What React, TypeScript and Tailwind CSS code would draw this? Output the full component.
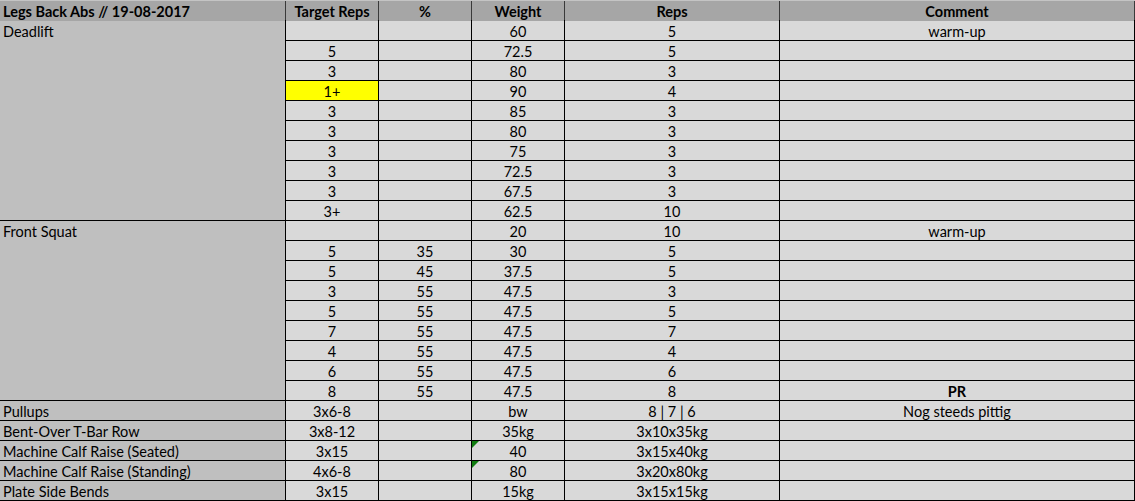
import React from 'react';

type Row = {
  target?: string;
  pct?: string;
  weight: string;
  reps: string;
  comment?: string;
  bold?: boolean;
  highlight?: boolean;
  flag?: boolean;
};

type Exercise = { name: string; rows: Row[] };

const EXERCISES: Exercise[] = [
  {
    name: 'Deadlift',
    rows: [
      { weight: '60', reps: '5', comment: 'warm-up' },
      { target: '5', weight: '72.5', reps: '5' },
      { target: '3', weight: '80', reps: '3' },
      { target: '1+', weight: '90', reps: '4', highlight: true },
      { target: '3', weight: '85', reps: '3' },
      { target: '3', weight: '80', reps: '3' },
      { target: '3', weight: '75', reps: '3' },
      { target: '3', weight: '72.5', reps: '3' },
      { target: '3', weight: '67.5', reps: '3' },
      { target: '3+', weight: '62.5', reps: '10' },
    ],
  },
  {
    name: 'Front Squat',
    rows: [
      { weight: '20', reps: '10', comment: 'warm-up' },
      { target: '5', pct: '35', weight: '30', reps: '5' },
      { target: '5', pct: '45', weight: '37.5', reps: '5' },
      { target: '3', pct: '55', weight: '47.5', reps: '3' },
      { target: '5', pct: '55', weight: '47.5', reps: '5' },
      { target: '7', pct: '55', weight: '47.5', reps: '7' },
      { target: '4', pct: '55', weight: '47.5', reps: '4' },
      { target: '6', pct: '55', weight: '47.5', reps: '6' },
      { target: '8', pct: '55', weight: '47.5', reps: '8', comment: 'PR', bold: true },
    ],
  },
  { name: 'Pullups', rows: [{ target: '3x6-8', weight: 'bw', reps: '8 | 7 | 6', comment: 'Nog steeds pittig' }] },
  { name: 'Bent-Over T-Bar Row', rows: [{ target: '3x8-12', weight: '35kg', reps: '3x10x35kg' }] },
  { name: 'Machine Calf Raise (Seated)', rows: [{ target: '3x15', weight: '40', reps: '3x15x40kg', flag: true }] },
  { name: 'Machine Calf Raise (Standing)', rows: [{ target: '4x6-8', weight: '80', reps: '3x20x80kg', flag: true }] },
  { name: 'Plate Side Bends', rows: [{ target: '3x15', weight: '15kg', reps: '3x15x15kg' }] },
];

const COLS = 'grid-cols-[285px_92px_92px_92px_214px_354px]';

function Cell({ children, className = '' }: { children?: React.ReactNode; className?: string }) {
  return (
    <div className={`relative bg-[#d9d9d9] text-center leading-[19px] pt-px whitespace-nowrap ${className}`}>
      {children}
    </div>
  );
}

export default function App() {
  return (
    <div
      className="w-[1135px] h-[501px] bg-white text-[14.5px] text-black"
      style={{ fontFamily: 'Lato, "Liberation Sans", sans-serif' }}
    >
      <div className="border-t border-[#c4c4c4]">
        <div className={`grid ${COLS} gap-x-px h-[19px] bg-[#3a3a3a] border-r border-[#3a3a3a] font-bold`}>
          <div className="bg-[#a6a6a6] pl-[3px] leading-[19px] pt-px whitespace-nowrap">Legs Back Abs // 19-08-2017</div>
          <div className="bg-[#a6a6a6] text-center leading-[19px] pt-px">Target Reps</div>
          <div className="bg-[#a6a6a6] text-center leading-[19px] pt-px">%</div>
          <div className="bg-[#a6a6a6] text-center leading-[19px] pt-px">Weight</div>
          <div className="bg-[#a6a6a6] text-center leading-[19px] pt-px">Reps</div>
          <div className="bg-[#a6a6a6] text-center leading-[19px] pt-px">Comment</div>
        </div>
      </div>
      <div className={`grid ${COLS} auto-rows-[19px] gap-px bg-black border border-l-0 border-black`}>
        {EXERCISES.map((ex) =>
          ex.rows.map((r, i) => (
            <React.Fragment key={`${ex.name}-${i}`}>
              {i === 0 && (
                <div
                  className="bg-[#bfbfbf] pl-[3px] leading-[19px] pt-px whitespace-nowrap"
                  style={{ gridRow: `span ${ex.rows.length}` }}
                >
                  {ex.name}
                </div>
              )}
              <Cell className={r.highlight ? 'bg-[#ffff00]' : ''}>{r.target}</Cell>
              <Cell>{r.pct}</Cell>
              <Cell>
                {r.flag && (
                  <svg className="absolute left-0 top-0" width="7" height="7" viewBox="0 0 7 7">
                    <polygon points="0,0 7,0 0,7" fill="#107c10" />
                  </svg>
                )}
                {r.weight}
              </Cell>
              <Cell>{r.reps}</Cell>
              <Cell className={r.bold ? 'font-bold' : ''}>{r.comment}</Cell>
            </React.Fragment>
          ))
        )}
      </div>
    </div>
  );
}
